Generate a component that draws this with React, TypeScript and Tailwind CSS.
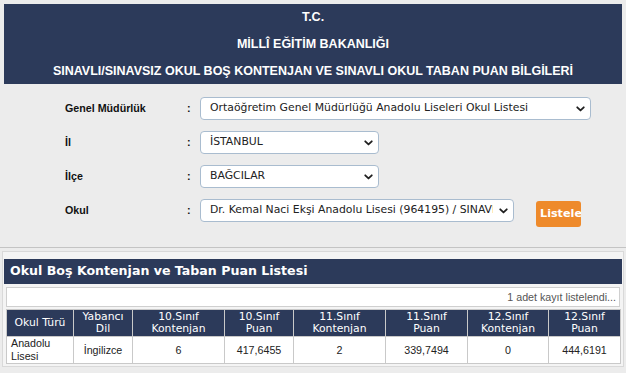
import React from "react";

const Chevron = () => (
  <svg width="9" height="6" viewBox="0 0 10 7" className="shrink-0" aria-hidden>
    <polyline points="1.2,1.5 5,5.2 8.8,1.5" fill="none" stroke="#1f1f1f" strokeWidth="2.1" strokeLinecap="round" strokeLinejoin="round" />
  </svg>
);

function FakeSelect({ value, width }: { value: string; width: string }) {
  return (
    <div
      className={`${width} h-[23px] flex items-center bg-white border border-[#a9bccf] rounded-[4px] pl-[9px] pr-[5px] font-['DejaVu_Sans',sans-serif] text-[10.85px] text-[#222]`}
    >
      <span className="flex-1 min-w-0 overflow-hidden whitespace-nowrap">{value}</span>
      <span className="ml-[6px] flex items-center">
        <Chevron />
      </span>
    </div>
  );
}

function Row({ label, children }: { label: string; children: React.ReactNode }) {
  return (
    <div className="flex items-start">
      <div className="w-[122px] h-[23px] flex items-center font-['Liberation_Sans',sans-serif] font-bold text-[10.7px] text-[#111]">
        {label}
      </div>
      <div className="w-[13px] h-[23px] flex items-center font-['Liberation_Sans',sans-serif] font-bold text-[10.7px] text-[#111]">
        :
      </div>
      {children}
    </div>
  );
}

const headers: [string, string][] = [
  ["Okul Türü", ""],
  ["Yabancı", "Dil"],
  ["10.Sınıf", "Kontenjan"],
  ["10.Sınıf", "Puan"],
  ["11.Sınıf", "Kontenjan"],
  ["11.Sınıf", "Puan"],
  ["12.Sınıf", "Kontenjan"],
  ["12.Sınıf", "Puan"],
];

const widths = [67, 59, 92, 69, 92, 82, 81, 72];

const data = ["Anadolu Lisesi", "İngilizce", "6", "417,6455", "2", "339,7494", "0", "444,6191"];

export default function App() {
  return (
    <div className="min-h-screen w-full bg-[#ececec] pt-[4px]">
      <header className="mx-[4px] h-[80px] bg-[#2c3a5a] text-white text-center font-bold text-[12.5px] leading-[27px] font-['Liberation_Sans',sans-serif]">
        <div>T.C.</div>
        <div>MİLLÎ EĞİTİM BAKANLIĞI</div>
        <div>SINAVLI/SINAVSIZ OKUL BOŞ KONTENJAN VE SINAVLI OKUL TABAN PUAN BİLGİLERİ</div>
      </header>

      <section className="pl-[65px] pt-[13px] pb-[20px] border-b border-[#c4c4c4] flex flex-col gap-[11px]">
        <Row label="Genel Müdürlük">
          <FakeSelect width="w-[391px]" value="Ortaöğretim Genel Müdürlüğü Anadolu Liseleri Okul Listesi" />
        </Row>
        <Row label="İl">
          <FakeSelect width="w-[179px]" value="İSTANBUL" />
        </Row>
        <Row label="İlçe">
          <FakeSelect width="w-[179px]" value="BAĞCILAR" />
        </Row>
        <Row label="Okul">
          <FakeSelect width="w-[314px]" value="Dr. Kemal Naci Ekşi Anadolu Lisesi (964195) / SINAVLI" />
          <button className="ml-[22px] mt-[2px] w-[45px] h-[26px] overflow-hidden rounded-[3px] bg-[#ee8a2b] pl-[4px] text-left text-white font-bold text-[11.2px] whitespace-nowrap font-['DejaVu_Sans',sans-serif]">
            Listele
          </button>
        </Row>
      </section>

      <section className="mt-[3px] mx-[2px] border border-[#d9d9d9] bg-[#f4f4f4] px-[1px] pt-[7px] pb-[2px]">
        <div className="h-[25px] bg-[#2c3a5a] flex items-center pl-[6px] text-white font-bold text-[12.6px] font-['DejaVu_Sans',sans-serif]">
          Okul Boş Kontenjan ve Taban Puan Listesi
        </div>
        <div className="mx-[2px] mt-[3px] h-[20px] border border-[#cfcfcf] bg-white flex items-center justify-end pr-[3px] font-['Liberation_Sans',sans-serif] text-[10.7px] text-[#555]">
          1 adet kayıt listelendi...
        </div>
        <table className="mx-[2px] mt-[2px] w-[614px] table-fixed border-collapse">
          <colgroup>
            {widths.map((w, i) => (
              <col key={i} style={{ width: w }} />
            ))}
          </colgroup>
          <thead>
            <tr className="h-[27px]">
              {headers.map(([a, b], i) => (
                <th
                  key={i}
                  className="bg-[#2c3a5a] border border-[#c9c9c9] text-white font-normal text-center align-middle font-['DejaVu_Sans',sans-serif] text-[10.8px] leading-[12px] p-0"
                >
                  <div>{a}</div>
                  {b && <div>{b}</div>}
                </th>
              ))}
            </tr>
          </thead>
          <tbody>
            <tr className="h-[26px]">
              {data.map((d, i) => (
                <td
                  key={i}
                  className={`bg-white border border-[#c9c9c9] align-middle font-['Liberation_Sans',sans-serif] text-[10.7px] leading-[13px] text-[#222] p-0 ${
                    i === 0 ? "text-left pl-[4px]" : "text-center"
                  }`}
                >
                  {d}
                </td>
              ))}
            </tr>
          </tbody>
        </table>
      </section>
    </div>
  );
}
